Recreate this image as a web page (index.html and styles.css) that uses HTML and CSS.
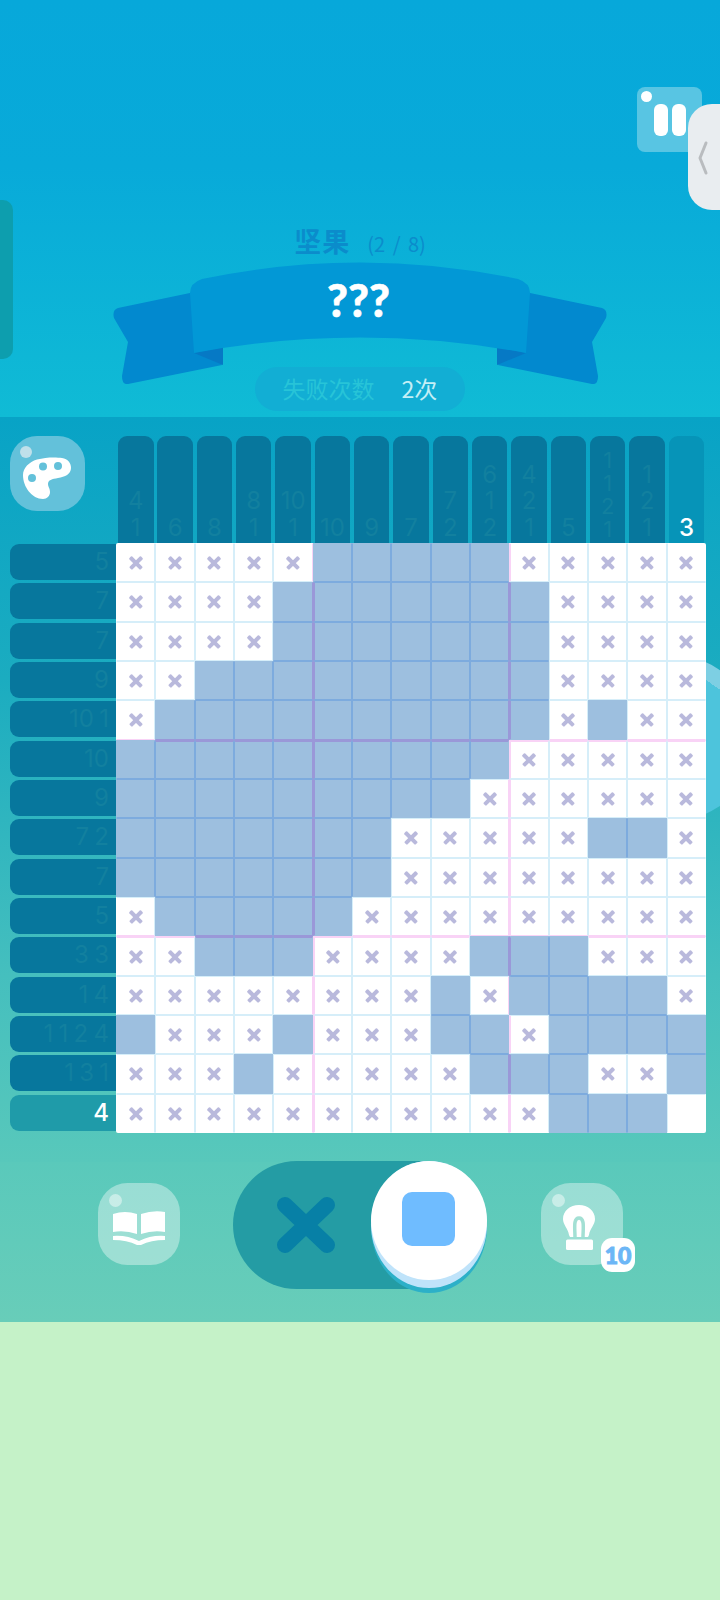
FILE: index.html
```html
<!DOCTYPE html>
<html lang="zh">
<head>
  <meta charset="UTF-8" />
  <meta name="viewport" content="width=device-width, initial-scale=1.0" />
  <title>坚果</title>
  <link rel="stylesheet" href="styles.css">
</head>
<body>

  <div class="game">
    <header class="stage">
      <div class="side-tab"></div>
      <button class="pause"><span class="shine"></span><i></i><i></i></button>
      <div class="handle">
        <svg width="12" height="36" viewBox="0 0 12 36"><path d="M10 3 4 18l6 15" fill="none" stroke="#b9bcbf" stroke-width="3" stroke-linecap="round" stroke-linejoin="round"/></svg>
      </div>

      <h1 class="level">坚果 <small>(2 / 8)</small></h1>

      <div class="ribbon">
        <svg width="500" height="122" viewBox="0 0 500 122">
          <path d="M8 46 80 31 112 103 18 122Q12 123 12 114L18 80 4 56Q2 48 8 46Z" fill="#0289cf"/>
          <path d="M492 46 420 31 388 103 482 122Q488 123 488 114L482 80 496 56Q498 48 492 46Z" fill="#0289cf"/>
          <path d="M84 91 113 103V85Z" fill="#0679c5"/>
          <path d="M416 91 387 103V85Z" fill="#0679c5"/>
          <path d="M80 31Q80 21 92 17 250-16 408 17 420 21 420 31L416 91Q250 60 84 91Z" fill="#0298d6"/>
        </svg>
        <b class="ribbon-text">???</b>
      </div>

      <div class="fails"><span>失败次数</span><em>2次</em></div>
    </header>

    <main class="board">
      <div class="wave"></div>

      <button class="round palette">
        <span class="shine"></span>
        <svg class="palette-icon" width="48" height="42" viewBox="0 -2 48 42">
          <path fill-rule="evenodd" fill="#fff" d="M14 .5C23-2 33-2 39-1 45 0 48 4 48 9 48 15 42 18 35 19 29 20 25 21 25 25 25 28 27 29 27 33 27 37 24 40 20 40 9 40 0 28 0 16 0 9 6 3 14 .5ZM16 7.500a4 4 0 1 0 8 0 4 4 0 1 0-8 0ZM31 7a4 4 0 1 0 8 0 4 4 0 1 0-8 0ZM5 19a4 4 0 1 0 8 0 4 4 0 1 0-8 0Z"/>
        </svg>
      </button>

      <div class="col-clues" id="colClues"></div>
      <div class="row-clues" id="rowClues"></div>
      <div class="grid" id="grid"></div>
    </main>

    <footer class="tools">
      <button class="round tool book">
        <span class="shine"></span>
        <svg width="52" height="34" viewBox="0 0 52 34" fill="#fff">
          <path d="M0 3Q12-1 24 3V23Q12 19 0 21Z"/>
          <path d="M28 3Q40-1 52 1V21Q40 19 28 23Z"/>
          <path d="M0 25Q14 24 26 30 38 24 52 25V29Q38 29 28 34H24Q14 29 0 29Z"/>
        </svg>
      </button>

      <div class="toggle">
        <svg class="cross" width="60" height="58" viewBox="0 0 60 58"><path d="M9 9 51 49M51 9 9 49" stroke="#0780a6" stroke-width="16" stroke-linecap="round"/></svg>
        <div class="knob"><div class="knob-face"><span class="swatch"></span></div></div>
      </div>

      <button class="round tool hint">
        <span class="shine"></span>
        <svg width="32" height="45" viewBox="0 0 32 45">
          <path fill="#fff" d="M16 0C25 0 32 6 32 14 32 20 27 23 26 30L25 32H7L6 30C5 23 0 20 0 14 0 6 7 0 16 0Z"/>
          <path fill="none" stroke="#a3e0d4" stroke-width="3.500" d="M12 32C12 24 10 13 16 13 22 13 20 24 20 32"/>
          <rect x="3" y="34.500" width="27" height="10.500" rx="1.500" fill="#fff"/>
        </svg>
        <span class="badge">10</span>
      </button>
    </footer>
  </div>

  <script src="script.js"></script>
</body>
</html>
```

FILE: styles.css
```css
:root {
  --line-soft: #d6eef9;
  --line-major: #f9d3f6;
  --line-fill: #7dabde;
  --line-fill-major: #9a98d8;
}
* {
  box-sizing: border-box;
}
body {
  margin: 0;
  background: #c5f2c8;
  font-family: Inter, 'Noto Sans CJK SC', sans-serif;
}
button {
  border: 0;
  padding: 0;
  font: inherit;
}
.game {
  position: relative;
  height: 1600px;
  overflow: hidden;
}

/* top area */
.stage {
  position: relative;
  height: 417px;
  padding-top: 223px;
  background: linear-gradient(#07a8da, #08aad9 40%, #10bbd5);
}
.side-tab {
  position: absolute;
  left: 0;
  top: 200px;
  width: 13px;
  height: 159px;
  border-radius: 0 10px 10px 0;
  background: #0d9eae;
}
.pause {
  position: absolute;
  left: 637px;
  top: 87px;
  width: 65px;
  height: 65px;
  border-radius: 8px;
  background: #58c5e3;
  display: flex;
  justify-content: center;
  align-items: center;
  gap: 4px;
}
.pause i {
  width: 14px;
  height: 32px;
  border-radius: 6px;
  background: #fff;
}
.pause .shine {
  left: 4px;
  top: 4px;
  width: 11px;
  height: 11px;
  background: #fff;
}
.handle {
  position: absolute;
  right: 0;
  top: 104px;
  width: 32px;
  height: 106px;
  border-radius: 24px 0 0 24px;
  background: #e9edf0;
  padding: 36px 0 0 8px;
}
.handle svg {
  display: block;
}
.level {
  margin: 0;
  height: 39px;
  line-height: 36px;
  text-align: center;
  color: #0b8ccb;
  font-family: 'Noto Sans CJK SC', sans-serif;
  font-size: 27px;
  font-weight: 700;
  letter-spacing: 1px;
}
.level small {
  font-size: 20px;
  font-weight: 400;
  letter-spacing: 0;
  word-spacing: 3px;
  margin-left: 10px;
}
.ribbon {
  position: relative;
  width: 500px;
  height: 122px;
  margin: 0 0 0 110px;
}
.ribbon svg {
  display: block;
}
.ribbon-text {
  position: absolute;
  left: 0;
  right: 3px;
  top: 13px;
  text-align: center;
  color: #fff;
  font-family: Lato, sans-serif;
  font-weight: 900;
  font-size: 45px;
  line-height: 50px;
  -webkit-text-stroke: 0.6px #fff;
}
.fails {
  position: absolute;
  left: 255px;
  top: 367px;
  width: 210px;
  height: 44px;
  padding-bottom: 3px;
  border-radius: 22px;
  background: #12aed4;
  display: flex;
  justify-content: center;
  align-items: center;
  gap: 27px;
  font-family: 'Noto Sans CJK SC', sans-serif;
  font-size: 23px;
  font-weight: 400;
}
.fails span {
  color: #27c4d8;
}
.fails em {
  font-style: normal;
  color: #c3eff6;
}

/* puzzle board */
.board {
  position: relative;
  height: 745px;
  background: linear-gradient(#08a3c6, #1bacc0 35%, #45bfbe 75%, #58c8bb);
  display: grid;
  grid-template-columns: 106px 590px;
  grid-template-rows: 126px 590px;
  padding-left: 10px;
}
/* pale disc behind the right edge of the grid */
.wave {
  position: absolute;
  left: 589px;
  top: 238px;
  width: 166px;
  height: 166px;
  border-radius: 50%;
  background: linear-gradient(215deg, #7dcfe3 21%, #4dc4dc 21%);
}
.round {
  position: relative;
  border-radius: 36%;
  background: rgba(255,255,255,0.38);
  display: flex;
  justify-content: center;
  align-items: center;
}
.shine {
  position: absolute;
  border-radius: 50%;
  background: rgba(255,255,255,0.45);
}
.palette {
  width: 75px;
  height: 75px;
  margin-top: 19px;
  justify-self: start;
  background: #63c1da;
}
.palette .shine {
  left: 10px;
  top: 10px;
  width: 12px;
  height: 12px;
  background: #bfe0ea;
}
.palette-icon {
  position: absolute;
  left: 13px;
  top: 21px;
}
.col-clues {
  position: relative;
  display: grid;
  grid-template-columns: repeat(15, 1fr);
  margin-top: 19px;
  height: 107px;
}
.col-clue {
  width: 35.5px;
  margin-left: 2px;
  border-radius: 9px 9px 0 0;
  background: #07779d;
  color: #12809f;
  font-size: 24px;
  line-height: 26.5px;
  text-align: center;
  display: flex;
  flex-direction: column;
  justify-content: flex-end;
  padding-bottom: 2px;
}
.col-clue.tight {
  font-size: 22px;
  line-height: 23px;
}
.col-clue.done {
  background: #0694b8;
  color: #fff;
  font-weight: 500;
}
.row-clues {
  position: relative;
  display: grid;
  grid-template-rows: repeat(15, 1fr);
}
.row-clue {
  height: 36px;
  margin-top: 1px;
  border-radius: 9px 0 0 9px;
  background: #07779d;
  color: #12809f;
  font-size: 24px;
  line-height: 36px;
  text-align: right;
  padding-right: 7px;
  word-spacing: -1.5px;
}
.row-clue.done {
  background: #1f9ba9;
  color: #fff;
  font-weight: 500;
}
.grid {
  position: relative;
  display: grid;
  grid-template-columns: repeat(15, 1fr);
  grid-template-rows: repeat(15, 1fr);
  background: #fff;
  border-radius: 2px;
}
.cell {
  position: relative;
  border: 1px solid transparent;
}
.cell.major-top {
  border-top-width: 2px;
}
.cell.major-left {
  border-left-width: 2px;
}
.cell.fill {
  background: #9dbfdf;
}
.cell.mark::before,
.cell.mark::after {
  content: "";
  position: absolute;
  left: 50%;
  top: 50%;
  width: 16px;
  height: 3.5px;
  margin: -1.75px 0 0 -8px;
  border-radius: 1px;
  background: #b9b9dc;
  transform: rotate(45deg);
}
.cell.mark::after {
  transform: rotate(-45deg);
}

/* tools under the board */
.tools {
  position: relative;
  height: 160px;
  background: linear-gradient(#5ac9bb, #68cdb9);
}
.tool {
  position: absolute;
  top: 21px;
  width: 82px;
  height: 82px;
}
.tool .shine {
  left: 11px;
  top: 11px;
  width: 13px;
  height: 13px;
}
.book {
  left: 98px;
  padding-top: 8px;
}
.hint {
  left: 541px;
  padding: 6px 6px 0 0;
}
.badge {
  position: absolute;
  left: 60px;
  top: 55px;
  width: 34px;
  height: 34px;
  border-radius: 11px;
  background: #fff;
  color: #6cb6f6;
  font-family: Lato, sans-serif;
  font-weight: 900;
  font-size: 23px;
  line-height: 34px;
  text-align: center;
  -webkit-text-stroke: 1px #6cb6f6;
}
.toggle {
  position: absolute;
  left: 233px;
  top: -1px;
  width: 254px;
  height: 128px;
  border-radius: 64px;
  background: #249ca4;
  display: flex;
  align-items: center;
  padding-left: 43px;
}
.knob {
  position: absolute;
  right: 0;
  top: 0;
  width: 116px;
  height: 132px;
  border-radius: 50%;
  background: #2cb0c8;
}
.knob-face {
  position: relative;
  width: 116px;
  height: 127px;
  border-radius: 50%;
  background: #bfe3fa;
}
.knob-face::before {
  content: "";
  position: absolute;
  left: 0;
  top: 0;
  width: 116px;
  height: 119px;
  border-radius: 50%;
  background: #fff;
}
.swatch {
  position: absolute;
  left: 31px;
  top: 31px;
  width: 53px;
  height: 54px;
  border-radius: 10px;
  background: #6fbcff;
}
```

FILE: script.js
```js
// puzzle state: # filled, x crossed, . untouched
const cells = [
  "xxxxx#####xxxxx",
  "xxxx#######xxxx",
  "xxxx#######xxxx",
  "xx#########xxxx",
  "x##########x#xx",
  "##########xxxxx",
  "#########xxxxxx",
  "#######xxxxx##x",
  "#######xxxxxxxx",
  "x#####xxxxxxxxx",
  "xx###xxxx###xxx",
  "xxxxxxxx#x####x",
  "#xxx#xxx##x####",
  "xxx#xxxxx###xx#",
  "xxxxxxxxxxx###.",
];
const rowClues = ["5", "7", "7", "9", "10 1", "10", "9", "7 2", "7", "5", "3 3", "1 4", "1 1 2 4", "1 3 1", "4"];
const colClues = ["4 1", "6", "8", "8 1", "10 1", "10", "9", "7", "7 2", "6 1 2", "4 2 1", "5", "1 1 2 1", "1 2 1", "3"];

const colBox = document.getElementById("colClues");
colClues.forEach((clue, i) => {
  const el = document.createElement("div");
  const nums = clue.split(" ");
  el.className = "col-clue" + (nums.length > 3 ? " tight" : "") + (i === 14 ? " done" : "");
  nums.forEach(n => {
    const line = document.createElement("span");
    line.textContent = n;
    el.appendChild(line);
  });
  colBox.appendChild(el);
});

const rowBox = document.getElementById("rowClues");
rowClues.forEach((clue, i) => {
  const el = document.createElement("div");
  el.className = "row-clue" + (i === 14 ? " done" : "");
  el.textContent = clue;
  rowBox.appendChild(el);
});

const isFill = (r, c) => cells[r] && cells[r][c] === "#";

// colour of one cell edge; every fifth line is the stronger one
function edge(r, c, nr, nc, major) {
  if (!cells[nr] || cells[nr][nc] === undefined) return "transparent";
  if (isFill(r, c)) {
    if (!isFill(nr, nc)) return "transparent";
    return major ? "var(--line-fill-major)" : "var(--line-fill)";
  }
  return major ? "var(--line-major)" : "var(--line-soft)";
}

const grid = document.getElementById("grid");
cells.forEach((row, r) => {
  [...row].forEach((state, c) => {
    const el = document.createElement("div");
    el.className = "cell" + (state === "#" ? " fill" : state === "x" ? " mark" : "");
    if (r > 0 && r % 5 === 0) el.classList.add("major-top");
    if (c > 0 && c % 5 === 0) el.classList.add("major-left");
    el.style.borderColor = [
      edge(r, c, r - 1, c, r % 5 === 0),
      edge(r, c, r, c + 1, (c + 1) % 5 === 0),
      edge(r, c, r + 1, c, (r + 1) % 5 === 0),
      edge(r, c, r, c - 1, c % 5 === 0),
    ].join(" ");
    grid.appendChild(el);
  });
});
```
